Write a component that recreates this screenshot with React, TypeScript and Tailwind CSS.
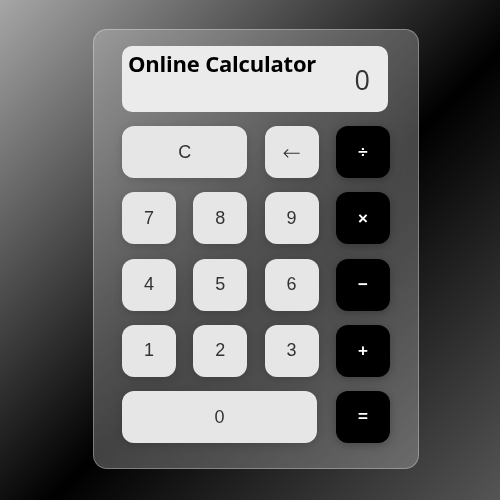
import React from 'react';

type Key = { label: string; kind: 'num' | 'op'; span?: string };

export default function App() {
  const keys: Key[] = [
    { label: 'C', kind: 'num', span: 'col-span-2' },
    { label: '←', kind: 'num' },
    { label: '÷', kind: 'op' },
    { label: '7', kind: 'num' },
    { label: '8', kind: 'num' },
    { label: '9', kind: 'num' },
    { label: '×', kind: 'op' },
    { label: '4', kind: 'num' },
    { label: '5', kind: 'num' },
    { label: '6', kind: 'num' },
    { label: '−', kind: 'op' },
    { label: '1', kind: 'num' },
    { label: '2', kind: 'num' },
    { label: '3', kind: 'num' },
    { label: '+', kind: 'op' },
    { label: '0', kind: 'num', span: 'col-span-3 w-[195px]' },
    { label: '=', kind: 'op' },
  ];

  return (
    <div className="w-[500px] h-[500px] overflow-hidden bg-[linear-gradient(135deg,#a6a6a6_0%,#000_55%,#555_100%)] pl-[93px] pt-[29px]">
      {/* Calculator card */}
      <div className="w-[326px] h-[440px] rounded-[14px] border border-white/30 bg-white/25 backdrop-blur-3xl pt-[16px] px-[28px]">
        {/* Display */}
        <div className="w-[266px] h-[66px] rounded-[10px] bg-[#ebebeb] relative flex items-center justify-end pr-[18px]">
          <h1 className="absolute left-[6px] top-[1px] font-['Open_Sans',sans-serif] font-bold text-[22px] tracking-[-0.2px] text-black">
            Online Calculator
          </h1>
          <span className="font-['Open_Sans',sans-serif] text-[27px] text-[#333] mt-[2px]">0</span>
        </div>

        {/* Keys */}
        <div className="mt-[14px] grid grid-cols-[repeat(4,54px)] auto-rows-[52px] gap-x-[17.3px] gap-y-[14.25px]">
          {keys.map((k, i) => (
            <button
              key={i}
              className={
                k.kind === 'op'
                  ? 'rounded-[12px] bg-black text-white font-bold text-[17px] font-["Liberation_Sans",Arial,sans-serif] flex items-center justify-center shadow-[0_2px_8px_rgba(0,0,0,0.25)]'
                  : `rounded-[12px] bg-[#e6e6e6] text-[#333] text-[18px] font-["Liberation_Sans",Arial,sans-serif] flex items-center justify-center shadow-[0_2px_8px_rgba(0,0,0,0.15)] ${k.span ?? ''}`
              }
            >
              {k.label === '←' ? <span className="text-[22px] font-['DejaVu_Sans',sans-serif] font-light">←</span> : k.label}
            </button>
          ))}
        </div>
      </div>
    </div>
  );
}
